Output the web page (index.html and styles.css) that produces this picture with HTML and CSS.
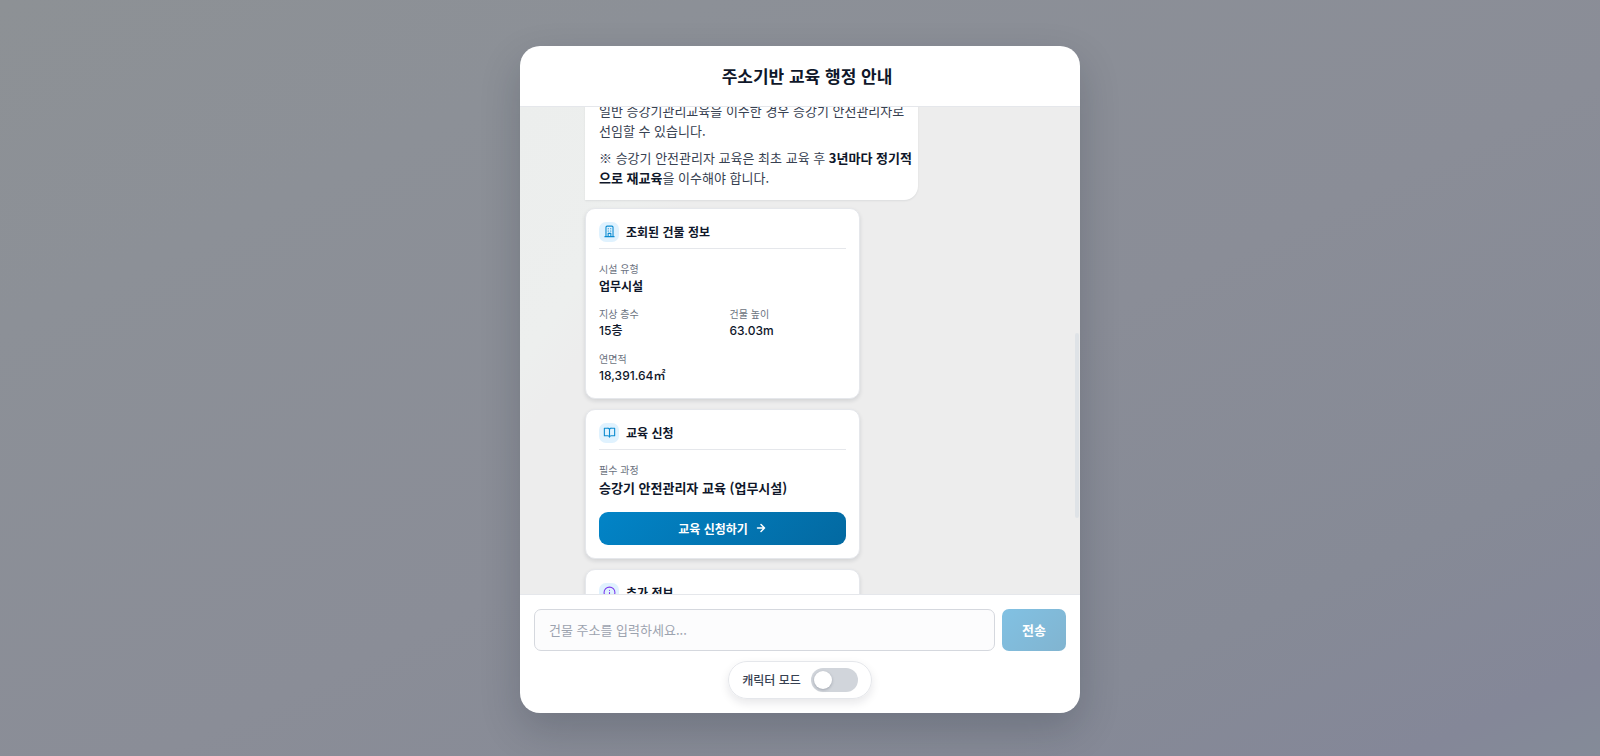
FILE: index.html
```html
<!DOCTYPE html>
<html lang="ko">
<head>
<meta charset="utf-8">
<meta name="viewport" content="width=device-width, initial-scale=1">
<title>주소기반 교육 행정 안내</title>
<link rel="stylesheet" href="styles.css">
</head>
<body>
<main class="dialog">
  <header class="dialog-header"><h1>주소기반 교육 행정 안내</h1></header>
  <section class="chat">
    <div class="messages">
      <div class="bubble">
        <p>일반 승강기관리교육을 이수한 경우 승강기 안전관리자로 선임할 수 있습니다.</p>
        <p>※ 승강기 안전관리자 교육은 최초 교육 후 <strong>3년마다 정기적으로 재교육</strong>을 이수해야 합니다.</p>
      </div>
      <article class="card">
        <h2 class="card-title">
          <span class="badge"><svg viewBox="0 0 24 24"><path d="M3.500 21.500h17M5.500 21.500V4a2 2 0 0 1 2-2h9a2 2 0 0 1 2 2v17.500M9.500 7h.5M14 7h.5M9.500 11h.5M14 11h.5M9.500 21v-5.500h5V21"/></svg></span>
          조회된 건물 정보
        </h2>
        <dl class="facts">
          <div class="wide"><dt>시설 유형</dt><dd>업무시설</dd></div>
          <div><dt>지상 층수</dt><dd class="number">15층</dd></div>
          <div><dt>건물 높이</dt><dd class="number">63.03m</dd></div>
          <div><dt>연면적</dt><dd class="number">18,391.64㎡</dd></div>
        </dl>
      </article>
      <article class="card">
        <h2 class="card-title">
          <span class="badge"><svg viewBox="0 0 24 24"><path d="M2.500 4h6a3.500 3.500 0 0 1 3.500 3v13.500a3 3 0 0 0-3-2.500H2.500zM21.500 4h-6a3.500 3.500 0 0 0-3.500 3v13.500a3 3 0 0 1 3-2.500h6.500z"/></svg></span>
          교육 신청
        </h2>
        <dl class="facts">
          <div class="wide"><dt>필수 과정</dt><dd class="course">승강기 안전관리자 교육 (업무시설)</dd></div>
        </dl>
        <button class="apply" type="button">교육 신청하기
          <svg viewBox="0 0 24 24"><path d="M5 12h14M12 5l7 7-7 7"/></svg>
        </button>
      </article>
      <article class="card">
        <h2 class="card-title">
          <span class="badge info"><svg viewBox="0 0 24 24"><circle cx="12" cy="12" r="10"/><path d="M12 16v-4M12 8h.01"/></svg></span>
          추가 정보
        </h2>
      </article>
    </div>
    <div class="scroll-thumb"></div>
  </section>
  <footer class="composer">
    <form class="composer-row">
      <input class="address" type="text" aria-label="건물 주소" placeholder="건물 주소를 입력하세요...">
      <button class="send" type="submit" disabled>전송</button>
    </form>
    <label class="mode">캐릭터 모드<input class="switch" type="checkbox" role="switch"></label>
  </footer>
</main>
</body>
</html>
```
FILE: styles.css
```css
* { box-sizing: border-box; }
body {
  margin: 0;
  height: 100vh;
  display: flex;
  align-items: center;
  justify-content: center;
  padding-top: 2px;
  background: linear-gradient(155deg, #8d9195 0%, #8c9097 22%, #8a8d97 55%, #868a96 80%, #848798 94%, #848b98 100%);
  font-family: "Noto Sans CJK KR", sans-serif;
  color: #0f172a;
}
h1, h2, p, dl, dd { margin: 0; }
button, input { font: inherit; }
svg { fill: none; stroke: currentColor; stroke-width: 2; stroke-linecap: round; stroke-linejoin: round; }

.dialog {
  width: 35vw;
  min-width: 360px;
  height: calc(100vh - 89px);
  display: flex;
  flex-direction: column;
  background: #fff;
  border-radius: 20px;
  overflow: hidden;
  box-shadow: 0 16px 40px rgba(15, 23, 42, .2);
}
.dialog-header {
  padding: 18px 0 18px 14px;
  border-bottom: 1px solid #e5e7eb;
  text-align: center;
}
h1 { font-size: 17px; line-height: 24px; font-weight: 600; }

.chat {
  flex: 1;
  min-height: 0;
  overflow: hidden;
  position: relative;
  background: linear-gradient(125deg, #eceeed 0%, #edefee 20%, #ededed 26%);
}
.messages { padding: 0 65px; margin-top: -20px; }
.bubble {
  width: 333px;
  padding: 14px 6px 12px 14px;
  background: #fff;
  border-radius: 0 14px 14px 0;
  box-shadow: 0 1px 2px rgba(15, 23, 42, .08);
  font-size: 13px;
  line-height: 20px;
  color: #374151;
}
.bubble p + p { margin-top: 7px; word-break: break-all; }
.bubble strong { color: #0f172a; font-weight: 600; }

.card {
  width: 275px;
  margin-top: 10px;
  padding: 13px;
  background: #fff;
  border: 1px solid #e5e7eb;
  border-radius: 10px;
  box-shadow: 0 2px 4px rgba(15, 23, 42, .12);
}
.bubble + .card { margin-top: 8px; }
.card-title {
  display: flex;
  align-items: center;
  gap: 7px;
  padding-bottom: 6px;
  border-bottom: 1px solid #e5e7eb;
  font-size: 12px;
  line-height: 20px;
  font-weight: 600;
}
.badge {
  width: 20px;
  height: 20px;
  display: grid;
  place-items: center;
  border-radius: 7px;
  background: #e0f2fe;
  color: #0b8bd0;
}
.badge svg { width: 13px; height: 13px; }
.info { color: #7c3aed; }

.facts {
  display: grid;
  grid-template-columns: 1fr 1fr;
  gap: 11px 14px;
  margin-top: 12px;
}
.wide { grid-column: 1 / -1; }
dt { font-size: 10px; line-height: 16px; color: #6b7280; }
dd { font-size: 12px; line-height: 18px; font-weight: 600; }
.number { font-family: Inter, "Noto Sans CJK KR", sans-serif; font-weight: 500; }
.facts .course { font-size: 13px; line-height: 20px; }

.apply {
  width: 100%;
  height: 33px;
  margin-top: 14px;
  display: flex;
  align-items: center;
  justify-content: center;
  gap: 7px;
  border: 0;
  border-radius: 9px;
  background: linear-gradient(135deg, #0284c7, #0369a1);
  color: #fff;
  font-size: 12px;
  font-weight: 600;
}
.apply svg { width: 12px; height: 12px; stroke-width: 3; }

.scroll-thumb {
  position: absolute;
  right: 1px;
  top: 46.500%;
  width: 4px;
  height: 38%;
  background: #dfe3e7;
  border-radius: 2px;
}

.composer {
  display: flex;
  flex-direction: column;
  align-items: center;
  gap: 10px;
  padding: 14px;
  border-top: 1px solid #e5e7eb;
}
.composer-row { display: flex; gap: 7px; width: 100%; }
.address {
  flex: 1;
  min-width: 0;
  height: 42px;
  padding: 0 14px;
  border: 1px solid #d5d8de;
  border-radius: 7px;
  background: #fcfcfd;
  font-size: 13px;
}
.address::placeholder { color: #9ca3af; }
.send {
  width: 64px;
  border: 0;
  border-radius: 7px;
  background: linear-gradient(135deg, #81c1e3, #81b4d0);
  color: #fff;
  font-size: 13px;
  font-weight: 700;
}
.mode {
  display: flex;
  align-items: center;
  gap: 10px;
  height: 38px;
  padding: 0 13px;
  border: 1px solid #e5e7eb;
  border-radius: 19px;
  box-shadow: 0 4px 10px rgba(15, 23, 42, .1);
  font-size: 12px;
  font-weight: 500;
  color: #374151;
}
.switch {
  appearance: none;
  margin: 0;
  width: 47px;
  height: 24px;
  padding: 3px;
  border-radius: 12px;
  background: #d1d5db;
}
.switch::before {
  content: "";
  display: block;
  width: 18px;
  height: 18px;
  border-radius: 50%;
  background: #fff;
  box-shadow: 0 1px 3px rgba(15, 23, 42, .25);
}
.switch:checked { background: #0284c7; }
.switch:checked::before { margin-left: auto; }
```
